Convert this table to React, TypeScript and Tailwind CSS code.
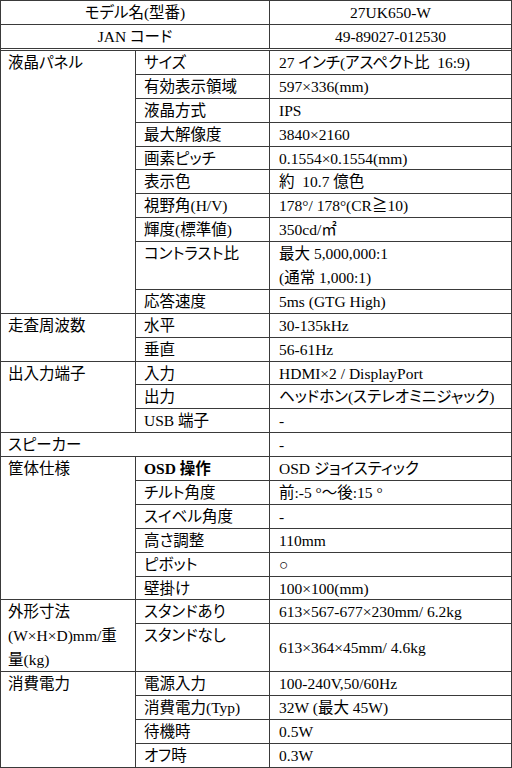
import React from "react";

type CellProps = {
  children?: React.ReactNode;
  className?: string;
};

function Cell({ children, className = "" }: CellProps) {
  return <div className={`bg-white whitespace-nowrap overflow-hidden ${className}`}>{children}</div>;
}

// single rows inside a group
const label = "pl-[8px] leading-[23px]";
const value = "pl-[9px] leading-[23px]";

export default function App() {
  return (
    <div className="w-[512px] h-[768px] overflow-hidden bg-white">
      <div className="grid w-[512px] h-[768px] grid-cols-[134px_133px_1fr] grid-rows-[23px_23px_1px_repeat(30,22.9px)] gap-px bg-[#3a3a3a] p-px text-[15.5px] text-black font-['Liberation_Serif','Noto_Sans_CJK_JP',serif] [font-feature-settings:'palt']">
        {/* header */}
        <Cell className="col-span-2 flex items-center justify-center">モデル名(型番)</Cell>
        <Cell className="flex items-center justify-center">27UK650-W</Cell>
        <Cell className="col-span-2 flex items-center justify-center">JAN コード</Cell>
        <Cell className="flex items-center justify-center">49-89027-012530</Cell>
        <Cell className="col-span-3" />

        {/* 液晶パネル */}
        <Cell className="row-span-11 pl-[7px] leading-[23px]">液晶パネル</Cell>
        <Cell className={label}>サイズ</Cell>
        <Cell className={value}>27 インチ(アスペクト比&nbsp;&nbsp;16:9)</Cell>
        <Cell className={label}>有効表示領域</Cell>
        <Cell className={value}>597×336(mm)</Cell>
        <Cell className={label}>液晶方式</Cell>
        <Cell className={value}>IPS</Cell>
        <Cell className={label}>最大解像度</Cell>
        <Cell className={value}>3840×2160</Cell>
        <Cell className={label}>画素ピッチ</Cell>
        <Cell className={value}>0.1554×0.1554(mm)</Cell>
        <Cell className={label}>表示色</Cell>
        <Cell className={value}>約&nbsp;&nbsp;10.7 億色</Cell>
        <Cell className={label}>視野角(H/V)</Cell>
        <Cell className={value}>178°/ 178°(CR≧10)</Cell>
        <Cell className={label}>輝度(標準値)</Cell>
        <Cell className={value}>350cd/㎡</Cell>
        <Cell className={`row-span-2 ${label}`}>コントラスト比</Cell>
        <Cell className="row-span-2 pl-[9px] leading-[24px]">
          最大 5,000,000:1
          <br />
          (通常 1,000:1)
        </Cell>
        <Cell className={label}>応答速度</Cell>
        <Cell className={value}>5ms (GTG High)</Cell>

        {/* 走査周波数 */}
        <Cell className="row-span-2 pl-[7px] leading-[23px]">走査周波数</Cell>
        <Cell className={label}>水平</Cell>
        <Cell className={value}>30-135kHz</Cell>
        <Cell className={label}>垂直</Cell>
        <Cell className={value}>56-61Hz</Cell>

        {/* 出入力端子 */}
        <Cell className="row-span-3 pl-[7px] leading-[23px]">出入力端子</Cell>
        <Cell className={label}>入力</Cell>
        <Cell className={value}>HDMI×2 / DisplayPort</Cell>
        <Cell className={label}>出力</Cell>
        <Cell className={value}>ヘッドホン(ステレオミニジャック)</Cell>
        <Cell className={label}>USB 端子</Cell>
        <Cell className={value}>-</Cell>

        <Cell className="col-span-2 pl-[7px] leading-[23px]">スピーカー</Cell>
        <Cell className={value}>-</Cell>

        {/* 筐体仕様 */}
        <Cell className="row-span-6 pl-[7px] leading-[23px]">筐体仕様</Cell>
        <Cell className={`${label} font-bold`}>OSD 操作</Cell>
        <Cell className={value}>OSD ジョイスティック</Cell>
        <Cell className={label}>チルト角度</Cell>
        <Cell className={value}>前:-5 °～後:15 °</Cell>
        <Cell className={label}>スイベル角度</Cell>
        <Cell className={value}>-</Cell>
        <Cell className={label}>高さ調整</Cell>
        <Cell className={value}>110mm</Cell>
        <Cell className={label}>ピボット</Cell>
        <Cell className={value}>○</Cell>
        <Cell className={label}>壁掛け</Cell>
        <Cell className={value}>100×100(mm)</Cell>

        {/* 外形寸法 */}
        <Cell className="row-span-3 pl-[7px] leading-[24px] whitespace-normal">
          外形寸法
          <br />
          (W×H×D)mm/重
          <br />
          量(kg)
        </Cell>
        <Cell className={label}>スタンドあり</Cell>
        <Cell className={value}>613×567-677×230mm/ 6.2kg</Cell>
        <Cell className={`row-span-2 ${label}`}>スタンドなし</Cell>
        <Cell className="row-span-2 pl-[9px] flex items-center">613×364×45mm/ 4.6kg</Cell>

        {/* 消費電力 */}
        <Cell className="row-span-4 pl-[7px] leading-[23px]">消費電力</Cell>
        <Cell className={label}>電源入力</Cell>
        <Cell className={value}>100-240V,50/60Hz</Cell>
        <Cell className={label}>消費電力(Typ)</Cell>
        <Cell className={value}>32W (最大 45W)</Cell>
        <Cell className={label}>待機時</Cell>
        <Cell className={value}>0.5W</Cell>
        <Cell className={label}>オフ時</Cell>
        <Cell className={value}>0.3W</Cell>
      </div>
    </div>
  );
}
